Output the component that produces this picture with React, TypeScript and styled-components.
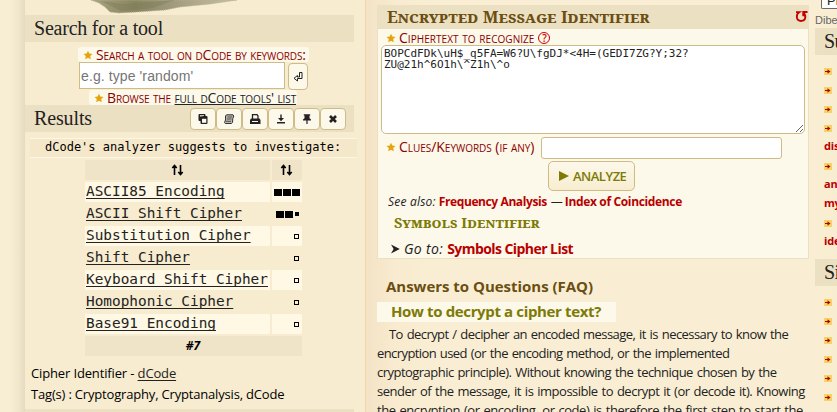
import React from 'react';
import styled, { createGlobalStyle } from 'styled-components';

const sans = '"Open Sans", "Noto Sans", sans-serif';
const serif = '"Liberation Serif", serif';
const display = '"Noto Serif", "DejaVu Serif", serif';
const mono = '"DejaVu Sans Mono", monospace';

const Global = createGlobalStyle`
  * { box-sizing: border-box; }
  body { margin: 0; overflow: hidden; background: #f9eed3; }
`;

const Page = styled.div`
  display: grid;
  grid-template-columns: 365px 450px 22px;
  width: 837px;
  height: 412px;
  overflow: hidden;
  color: #222;
  font: 13px/19px ${sans};
  white-space: nowrap;
`;

const Text = styled.span<{ $ls?: number }>`
  letter-spacing: ${(p) => p.$ls ?? 0}px;
`;

/* Left column */
const Sidebar = styled.aside`
  padding-left: 25px;
  background: linear-gradient(90deg, #f8eed3 10px, #f1e7cc 18px, #e6dbc0 25px, #f6ebd0 25px);
  overflow: hidden;
`;
const Panel = styled.div`
  height: 412px;
  background: #f7ecd0;
  display: flex;
  flex-direction: column;
`;
const Picture = styled.svg`
  display: block;
  width: 329px;
  height: 15px;
  flex: none;
`;
const Bar = styled.div`
  display: flex;
  align-items: center;
  justify-content: space-between;
  flex: none;
  width: 329px;
  height: 27px;
  padding: 0 8px 0 9px;
  background: #ece0c3;
  color: #222;
  font: 20px/27px ${serif};
`;
const Caption = styled.div<{ $left: number; $width: number; $top?: number }>`
  display: flex;
  align-items: center;
  flex: none;
  width: ${(p) => p.$width}px;
  height: 15px;
  margin: ${(p) => p.$top ?? 0}px 0 0 ${(p) => p.$left}px;
  padding-left: 5px;
  border-radius: 3px;
  background: #fcf8ea;
  color: #8b0000;
  font: 14px/15px ${sans};
  font-variant: small-caps;
`;
const StarIcon = styled.svg`
  flex: none;
  width: 10px;
  height: 10px;
  margin-right: 3px;
  fill: #e5a50a;
`;
const Link = styled.a<{ $ls?: number; $offset?: number }>`
  color: #222;
  text-decoration: underline;
  text-decoration-thickness: 1px;
  text-decoration-skip-ink: none;
  text-underline-offset: ${(p) => p.$offset ?? 2}px;
  letter-spacing: ${(p) => p.$ls ?? 0}px;
`;
const SearchRow = styled.div`
  display: flex;
  flex: none;
  height: 28px;
  margin-left: 54px;
`;
const SearchInput = styled.input`
  width: 206px;
  height: 27px;
  padding: 0 1px;
  border: 1px solid #cfbb85;
  background: #fff;
  font: 14px "Liberation Sans", sans-serif;
  letter-spacing: 0.1px;
  &::placeholder { color: #757575; opacity: 1; }
`;
const IconButton = styled.button<{ $w: number; $h: number; $m?: string }>`
  display: flex;
  align-items: center;
  justify-content: center;
  width: ${(p) => p.$w}px;
  height: ${(p) => p.$h}px;
  margin: ${(p) => p.$m ?? '0'};
  padding: 0;
  border: 1px solid #cfbb85;
  border-radius: 4px;
  background: #fcf8ea;
  svg { width: 12px; height: 12px; }
`;
const Tools = styled.div`
  display: flex;
`;
const Suggestion = styled.div`
  flex: none;
  width: 327px;
  height: 20px;
  margin: 6px 0 2px 5px;
  padding-left: 15px;
  border: solid #fcf6e4;
  border-width: 1px 0;
  background: #f5e8ca;
  color: #000;
  font: 12px/17px ${mono};
`;
const Results = styled.div`
  display: grid;
  grid-template-columns: 185px 30px;
  grid-auto-rows: 20px;
  gap: 2px;
  margin-left: 60px;
  font: 14.4px/18px ${mono};
`;
const Cell = styled.div<{ $tone?: 'head' | 'light'; $score?: boolean; $wide?: boolean }>`
  display: flex;
  align-items: ${(p) => (p.$tone === 'head' || p.$score ? 'center' : 'flex-start')};
  gap: 1px;
  grid-column: ${(p) => (p.$wide ? 'span 2' : 'auto')};
  justify-content: ${(p) => (p.$tone === 'head' ? 'center' : p.$score ? 'flex-end' : 'flex-start')};
  padding: 0 2px 0 1px;
  background: ${(p) => (p.$tone === 'head' ? '#f0e4c8' : p.$tone === 'light' ? '#fef8e4' : 'transparent')};
`;
const Block = styled.i<{ $kind: string }>`
  width: ${(p) => (p.$kind === 'full' ? 8 : p.$kind === 'small' ? 4 : 5)}px;
  height: ${(p) => (p.$kind === 'full' ? 7 : p.$kind === 'small' ? 4 : 5)}px;
  margin-right: ${(p) => (p.$kind === 'full' ? 0 : 1)}px;
  margin-left: ${(p) => (p.$kind === 'small' ? 1 : 0)}px;
  background: ${(p) => (p.$kind === 'empty' ? 'transparent' : '#000')};
  border: 1px solid #000;
`;
const Total = styled.b`
  color: #000;
  font: italic bold 12px/20px ${sans};
`;
const Meta = styled.div`
  display: flex;
  flex-direction: column;
  flex: none;
  height: 53px;
  padding: 7px 0 0 6px;
  color: #000;
  font: 13px/21px ${sans};
`;

/* Middle column */
const Main = styled.main`
  padding: 5px 6px 0 11px;
  border-left: 1px solid #eed5b0;
  background: linear-gradient(90deg, #f4e3c5, #f5e5c9 8px, #f8ebcf 30px, #f9eed3 70px);
`;
const Form = styled.section`
  width: 432px;
  height: 254px;
  border: 1px solid #ece0c3;
  border-top: 0;
  background: #fcf8ea;
`;
const FormTitle = styled.h2`
  display: flex;
  justify-content: space-between;
  align-items: center;
  height: 24px;
  margin: 0;
  padding: 0 0 1px 9px;
  background: #ece0c3;
  color: #6b4e12;
  font: bold 16.5px/23px ${display};
  font-variant: small-caps;
`;
const ResetIcon = styled.svg`
  width: 13px;
  height: 13px;
`;
const Label = styled.label`
  display: flex;
  align-items: center;
  height: 16px;
  padding: 2px 0 0 8px;
  color: #8b0000;
  font: 14px/16px ${sans};
  font-variant: small-caps;
`;
const Help = styled.span`
  width: 12px;
  height: 12px;
  margin-left: 4px;
  border: 1px solid #c00;
  border-radius: 50%;
  color: #c00;
  font: 600 10px/10px ${sans};
  text-align: center;
`;
const CipherText = styled.textarea`
  display: block;
  width: 424px;
  height: 89px;
  margin: 0 0 3px 3px;
  padding: 2px;
  border: 1px solid #cfbb85;
  border-radius: 5px;
  background: #fff;
  color: #222;
  font: 11px/11px ${mono};
  resize: both;
  overflow: hidden;
`;
const ClueRow = styled.div`
  display: flex;
  align-items: center;
  height: 22px;
`;
const ClueLabel = styled(Label)`
  width: 163px;
  padding-top: 0;
  padding-bottom: 2px;
`;
const ClueInput = styled.input`
  width: 241px;
  height: 22px;
  border: 1px solid #cfbb85;
  border-radius: 3px;
  background: #fff;
`;
const Analyze = styled.button`
  display: flex;
  align-items: center;
  width: 87px;
  height: 30px;
  margin: 2px 0 0 170px;
  padding: 0 0 0 10px;
  border: 1px solid #cfbb85;
  border-radius: 5px;
  background: linear-gradient(#fcf8ea, #f8edd0);
  color: #7d7a06;
  font: 600 13px/28px ${sans};
  svg { width: 10px; height: 10px; margin-right: 4px; fill: #7d7a06; }
`;
const SeeAlso = styled.p`
  margin: 1px 0 0 10px;
  font: italic 12px/20px ${sans};
`;
const Dash = styled.span`
  margin: 0 4px;
  letter-spacing: -2px;
  font-style: normal;
`;
const RedLink = styled.a<{ $ls: number }>`
  color: #b80000;
  font-style: normal;
  font-weight: bold;
  letter-spacing: ${(p) => p.$ls}px;
`;
const SubTitle = styled.h3`
  height: 22px;
  margin: -1px 0 0 16px;
  color: #7d7a06;
  font: bold 14.5px/22px ${display};
  font-variant: small-caps;
`;
const GoTo = styled.p`
  display: flex;
  align-items: center;
  margin: 5px 0 0 12px;
  font: italic 14px/22px ${sans};
  svg { width: 10px; height: 10px; margin-right: 4px; }
`;
const FaqTitle = styled.h2`
  margin: 16px 0 0 9px;
  color: #6b4e12;
  font: bold 15px/22px ${sans};
`;
const Question = styled.h3`
  width: 239px;
  height: 20px;
  margin: 5px 0 3px;
  padding-left: 14px;
  background: #fcf8ea;
  color: #7d7a06;
  font: bold 15px/18px ${sans};
`;
const Answer = styled.p`
  margin: 0;
  font: 13px/19px ${sans};
  word-spacing: 1px;
`;
const Line = styled.span<{ $ls: number; $indent?: boolean }>`
  display: block;
  padding-left: ${(p) => (p.$indent ? 12 : 0)}px;
  letter-spacing: ${(p) => p.$ls}px;
`;

/* Right column */
const Rail = styled.aside`
  width: 22px;
  overflow: hidden;
  background: linear-gradient(90deg, #f9eed3, #f9edd1);
`;
const Field = styled.div`
  width: 60px;
  height: 9px;
  margin-left: 6px;
  padding-left: 5px;
  border: solid #6b6b6b;
  border-width: 0 0 1px 1px;
  border-radius: 0 0 0 2px;
  background: #fff;
  color: #222;
  font: 13px/2px "Liberation Sans", sans-serif;
`;
const FieldNote = styled.div`
  height: 19px;
  color: #666;
  font: 11px/22px "Liberation Sans", sans-serif;
`;
const RailTitle = styled.div`
  height: 27px;
  padding-left: 9px;
  background: #ece0c3;
  font: 20px/27px ${serif};
  letter-spacing: -0.5px;
`;
const RailList = styled.div<{ $top: number; $height?: number }>`
  height: ${(p) => (p.$height ? p.$height + 'px' : 'auto')};
  padding: ${(p) => p.$top}px 0 0 9px;
  color: #b80000;
  font: bold 11px/19px ${sans};
  letter-spacing: -0.2px;
`;
const RailRow = styled.div<{ $gap?: number }>`
  display: flex;
  align-items: center;
  height: 19px;
  margin-top: ${(p) => p.$gap ?? 0}px;
  svg { width: 8px; height: 7px; }
`;

const Star = () => (
  <StarIcon viewBox="0 0 10 10">
    <path d="M5 .7 6.3 3.6 9.5 4 7.2 6.1 7.8 9.2 5 7.7 2.2 9.2 2.8 6.1.5 4 3.7 3.6Z" />
  </StarIcon>
);
const Bullet = () => (
  <svg viewBox="0 0 8 7">
    <path fill="#f5d367" d="M0 0h8v7H0z" />
    <path fill="#b00000" d="M1 3h2.500V1.200L6.500 3.500 3.500 5.800V4H1z" />
  </svg>
);

const toolIcons = [
  <svg viewBox="0 0 12 12" key="copy"><path fill="#222" d="M2.500 1h5a1 1 0 0 1 1 1v1h1a1 1 0 0 1 1 1v6a1 1 0 0 1-1 1h-5a1 1 0 0 1-1-1V8H2.500a1 1 0 0 1-1-1V2a1 1 0 0 1 1-1Z" /><path fill="#fcf8ea" d="M3 3.500V2.300h4V3Z" /><path fill="#fcf8ea" d="M5 5.800h4.300V9.800H5Z" /></svg>,
  <svg viewBox="0 0 12 12" key="scroll"><path fill="#b7b4a9" stroke="#333" d="M3.500 1.800h6.500l.8 1.200-1 2.500-.3 4-1 1H2.300l-.8-1 1-2.500L2.500 3Z" /><path stroke="#555" d="M4.500 4h4.500M4 6h4.500M3 8.300h5" /></svg>,
  <svg viewBox="0 0 12 12" key="print"><path fill="#fcf8ea" stroke="#222" strokeWidth="1.300" d="M3.500 6V1.700H8L9 3v3" /><path fill="#222" d="M2 5.500h8.500l1 1.500v4H1V7Z" /><path stroke="#fcf8ea" d="M3 8.500h6" /></svg>,
  <svg viewBox="0 0 12 12" key="save"><path fill="#222" d="M5.300 1.500h1.400V5H9L6 8.200 3 5h2.300ZM2 9h8v1.500H2Z" /></svg>,
  <svg viewBox="0 0 12 12" key="pin"><path fill="#222" d="M2.800 1.200h6.400v1.300H8.500v2.700L10 6.500v1.100H6.600V11H5.400V7.600H2V6.500l1.500-1.300V2.500h-.7Z" /></svg>,
  <svg viewBox="0 0 12 12" key="close"><path stroke="#222" strokeWidth="2.600" d="m3 3 6 6M9 3 3 9" /></svg>,
];

const results: [string, string[]][] = [
  ['ASCII85 Encoding', ['full', 'full', 'full']],
  ['ASCII Shift Cipher', ['full', 'full', 'small']],
  ['Substitution Cipher', ['empty']],
  ['Shift Cipher', ['empty']],
  ['Keyboard Shift Cipher', ['empty']],
  ['Homophonic Cipher', ['empty']],
  ['Base91 Encoding', ['empty']],
];

const SortIcon = () => (
  <svg width="13" height="12" viewBox="0 0 13 12" fill="none" stroke="#000" strokeWidth="1.600">
    <path d="M3.500 11V1.800M1.300 4l2.200-2.500L5.700 4M9.500 1v9.200M7.300 8l2.200 2.500L11.700 8" />
  </svg>
);

const lines: [string, number][] = [
  ['To decrypt / decipher an encoded message, it is necessary to know the', -0.57],
  ['encryption used (or the encoding method, or the implemented', -0.59],
  ['cryptographic principle). Without knowing the technique chosen by the', -0.53],
  ['sender of the message, it is impossible to decrypt it (or decode it). Knowing', -0.49],
  ['the encryption (or encoding, or code) is therefore the first step to start the', -0.45],
];

export default function App() {
  return (
    <Page>
      <Global />
      <Sidebar>
        <Panel>
          <Picture viewBox="0 0 329 15">
            <defs>
              <linearGradient id="stone">
                <stop offset="0" stopColor="#aaa481" />
                <stop offset=".3" stopColor="#88855f" />
                <stop offset=".55" stopColor="#a09a7b" />
                <stop offset="1" stopColor="#c9c2a3" />
              </linearGradient>
            </defs>
            <path fill="url(#stone)" stroke="#b5b293" strokeDasharray="1 1" d="M66 0 74 3 80 7 85 12 94 13 112 12 140 10 155 7 185 4 212 0Z" />
            <path fill="#77765a" opacity=".35" d="M76 1 98 4 124 2 150 0 128 8 96 11Z" />
          </Picture>
          <Bar><Text $ls={-0.22}>Search for a tool</Text></Bar>
          <Caption $left={53} $width={231} $top={5}>
            <Star /><Text $ls={-0.14}>Search a tool on dCode by keywords:</Text>
          </Caption>
          <SearchRow>
            <SearchInput placeholder="e.g. type 'random'" />
            <IconButton $w={20} $h={27} $m="1px 0 0 3px">
              <svg viewBox="0 0 12 12" fill="none" stroke="#222"><path d="M7.500 1.500H10v6H5.500v2.500L2 7.300l3.500-2.800V6H7.500Z" /></svg>
            </IconButton>
          </SearchRow>
          <Caption $left={64} $width={208}>
            <Star /><Text $ls={-0.13}>Browse the <Link $ls={-0.13} $offset={1}>full dCode tools' list</Link></Text>
          </Caption>
          <Bar>
            <Text $ls={-0.13}>Results</Text>
            <Tools>{toolIcons.map((icon, i) => <IconButton key={i} $w={26} $h={22}>{icon}</IconButton>)}</Tools>
          </Bar>
          <Suggestion>dCode's analyzer suggests to investigate:</Suggestion>
          <Results>
            <Cell $tone="head"><SortIcon /></Cell>
            <Cell $tone="head"><SortIcon /></Cell>
            {results.map(([name, score], i) => (
              <React.Fragment key={name}>
                <Cell $tone={i % 2 ? undefined : 'light'}><Link>{name}</Link></Cell>
                <Cell $tone={i % 2 ? undefined : 'light'} $score>
                  {score.map((kind, j) => <Block key={j} $kind={kind} />)}
                </Cell>
              </React.Fragment>
            ))}
            <Cell $tone="head" $wide><Total>#7</Total></Cell>
          </Results>
          <Meta>
            <Text $ls={-0.14}>Cipher Identifier - <Link $ls={-0.14}>dCode</Link></Text>
            <Text $ls={-0.18}>Tag(s) : Cryptography, Cryptanalysis, dCode</Text>
          </Meta>
          <Bar />
        </Panel>
      </Sidebar>

      <Main>
        <Form>
          <FormTitle>
            <Text $ls={0.05}>Encrypted Message Identifier</Text>
            <ResetIcon viewBox="0 0 13 13" fill="none" stroke="#c40000" strokeWidth="1.800">
              <path d="M1 2.200h3.200C.6 4.500 1 11 6 11s5.600-5.500 2.300-8.500M12.500 2H8.200v4.300" />
            </ResetIcon>
          </FormTitle>
          <Label><Star /><Text $ls={0.05}>Ciphertext to recognize</Text><Help>?</Help></Label>
          <CipherText
            spellCheck={false}
            defaultValue={'BOPCdFDk\\uH$_q5FA=W6?U\\fgDJ*<4H=(GEDI7ZG?Y;32?\nZU@21h^6O1h\\^Z1h\\^o'}
          />
          <ClueRow>
            <ClueLabel><Star /><Text $ls={-0.03}>Clues/Keywords (if any)</Text></ClueLabel>
            <ClueInput />
          </ClueRow>
          <Analyze><svg viewBox="0 0 10 10"><path d="M0 0 10 5 0 10Z" /></svg><Text $ls={-0.5}>ANALYZE</Text></Analyze>
          <SeeAlso>
            <Text $ls={0.2}>See also:</Text> <RedLink $ls={-0.4}>Frequency Analysis</RedLink><Dash>—</Dash><RedLink $ls={-0.35}>Index of Coincidence</RedLink>
          </SeeAlso>
          <SubTitle><Text $ls={0.1}>Symbols Identifier</Text></SubTitle>
          <GoTo>
            <svg viewBox="0 0 10 10"><path fill="#222" d="M1 .5 9.800 5 1 9.500 3.600 5Z" /></svg>
            <Text $ls={0.35}>Go to:&nbsp;</Text><RedLink $ls={-0.56}>Symbols Cipher List</RedLink>
          </GoTo>
        </Form>
        <FaqTitle><Text $ls={-0.02}>Answers to Questions (FAQ)</Text></FaqTitle>
        <Question><Text $ls={-0.36}>How to decrypt a cipher text?</Text></Question>
        <Answer>
          {lines.map(([text, ls], i) => <Line key={i} $ls={ls} $indent={i === 0}>{text}</Line>)}
        </Answer>
      </Main>

      <Rail>
        <Field>Pi</Field>
        <FieldNote>Diberi</FieldNote>
        <RailTitle>Summary</RailTitle>
        <RailList $top={7} $height={204}>
          {[0, 1, 2, 3].map((i) => <RailRow key={i}><Bullet /></RailRow>)}
          <RailRow $gap={-2}>distribution</RailRow>
          <RailRow $gap={2}><Bullet /></RailRow>
          <RailRow $gap={-2}>analysis</RailRow>
          <RailRow>my text</RailRow>
          <RailRow $gap={2}><Bullet /></RailRow>
          <RailRow $gap={-2}>identifier</RailRow>
        </RailList>
        <RailTitle>Similar</RailTitle>
        <RailList $top={7}>
          {[0, 1, 2, 3, 4, 5].map((i) => <RailRow key={i}><Bullet /></RailRow>)}
        </RailList>
      </Rail>
    </Page>
  );
}
